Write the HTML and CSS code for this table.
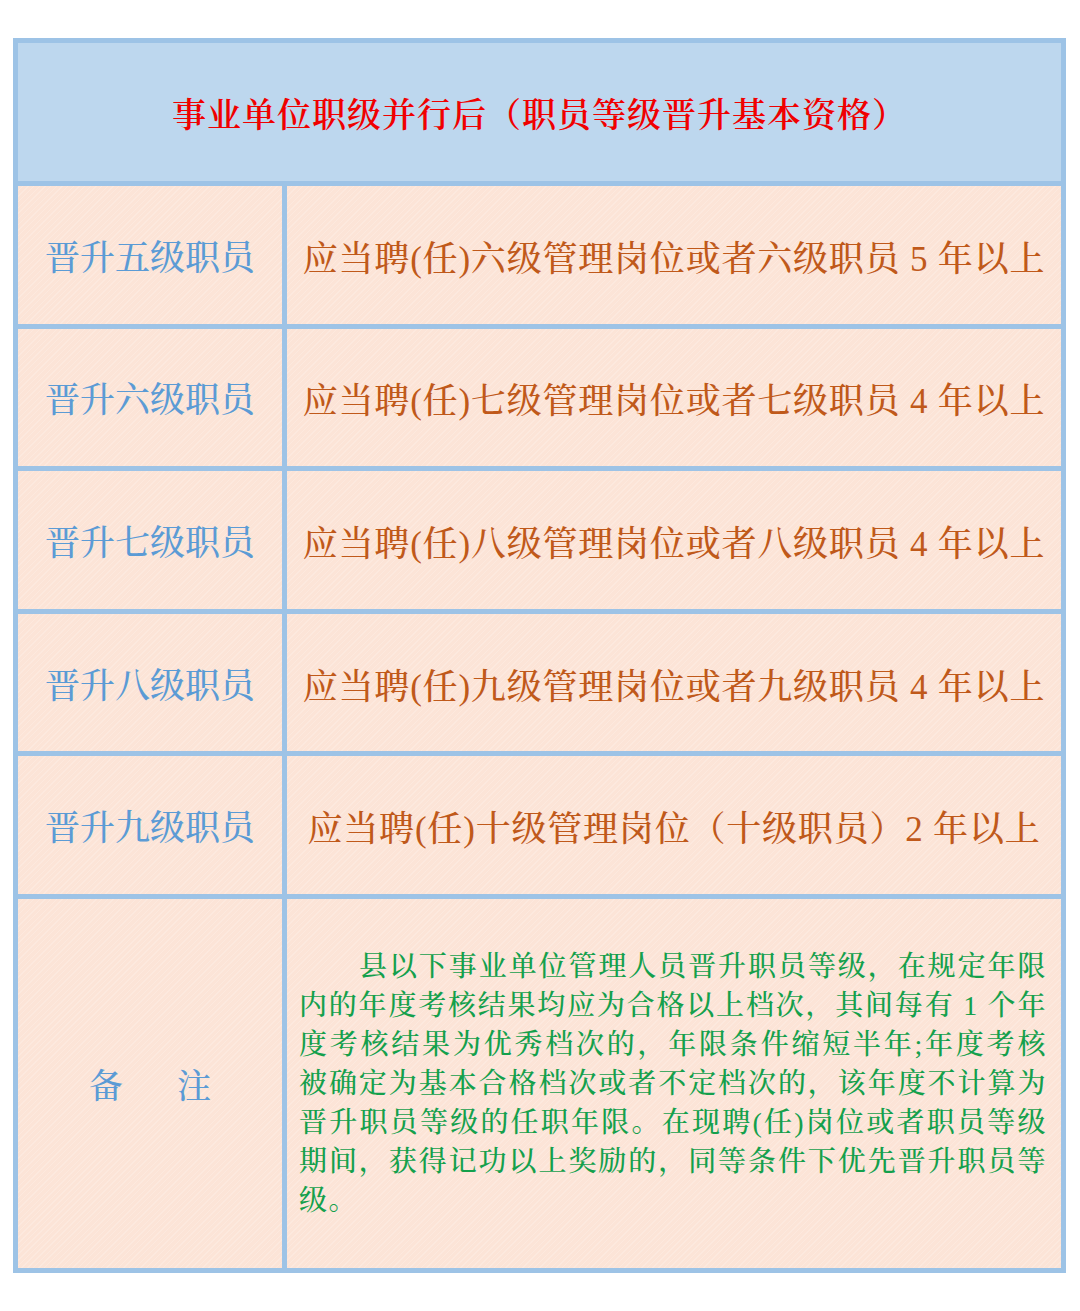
FILE: index.html
```html
<!DOCTYPE html>
<html lang="zh-CN">
<head>
<meta charset="utf-8">
<title>事业单位职级并行后（职员等级晋升基本资格）</title>
<link rel="stylesheet" href="styles.css">
</head>
<body>
<div class="table">
  <div class="cell head">事业单位职级并行后（职员等级晋升基本资格）</div>

  <div class="cell label">晋升五级职员</div>
  <div class="cell value">应当聘(任)六级管理岗位或者六级职员 5 年以上</div>

  <div class="cell label">晋升六级职员</div>
  <div class="cell value">应当聘(任)七级管理岗位或者七级职员 4 年以上</div>

  <div class="cell label">晋升七级职员</div>
  <div class="cell value">应当聘(任)八级管理岗位或者八级职员 4 年以上</div>

  <div class="cell label">晋升八级职员</div>
  <div class="cell value">应当聘(任)九级管理岗位或者九级职员 4 年以上</div>

  <div class="cell label">晋升九级职员</div>
  <div class="cell value">应当聘(任)十级管理岗位（十级职员）2 年以上</div>

  <div class="cell label note-label"><span>备</span><span>注</span></div>
  <div class="cell note">
    <div class="note-text">
      <span class="line first">县以下事业单位管理人员晋升职员等级，在规定年限</span>
      <span class="line">内的年度考核结果均应为合格以上档次，其间每有 1 个年</span>
      <span class="line">度考核结果为优秀档次的，年限条件缩短半年;年度考核</span>
      <span class="line">被确定为基本合格档次或者不定档次的，该年度不计算为</span>
      <span class="line">晋升职员等级的任职年限。在现聘(任)岗位或者职员等级</span>
      <span class="line">期间，获得记功以上奖励的，同等条件下优先晋升职员等</span>
      <span class="line last">级。</span>
    </div>
  </div>
</div>
</body>
</html>
```

FILE: styles.css
```css
html, body {
  margin: 0;
  padding: 0;
  background: #ffffff;
}

body {
  font-family: "Liberation Serif", "Noto Serif CJK SC", "Noto Sans CJK SC", serif;
}

.table {
  margin: 38px 0 0 13px;
  width: 1053px;
  height: 1235px;
  box-sizing: border-box;
  padding: 5px;
  background: #9dc3e6;
  display: grid;
  grid-template-columns: 264px 774px;
  grid-template-rows: 138px repeat(5, 137.6px) 1fr;
  gap: 5px;
}

.cell {
  display: flex;
  align-items: center;
  justify-content: center;
  background-color: #fce4d7;
  background-image: repeating-linear-gradient(135deg, rgba(255,255,255,0) 0 3px, rgba(255,255,255,0.18) 3px 4px);
}

.head {
  grid-column: 1 / 3;
  background: #bdd7ee;
  color: #f00000;
  font-size: 34px;
  font-weight: 600;
  letter-spacing: 1px;
}

.label {
  color: #5b9bd5;
  font-size: 35px;
  font-weight: 500;
  letter-spacing: 0;
}

.value {
  color: #c0591a;
  font-size: 35px;
  font-weight: 500;
  letter-spacing: 0.8px;
  padding-top: 2px;
}

.note-label {
  gap: 54px;
  font-size: 34px;
}

.note {
  justify-content: flex-start;
  padding: 0 2px 0 12px;
}

.note-text {
  width: 748px;
  color: #14a04c;
  font-size: 28px;
  font-weight: 500;
  line-height: 39px;
  letter-spacing: 1.6px;
}

.line {
  display: block;
  white-space: nowrap;
  text-align: justify;
  text-align-last: justify;
}

.line.first {
  text-indent: 60px;
}

.line.last {
  text-align-last: left;
}
```
